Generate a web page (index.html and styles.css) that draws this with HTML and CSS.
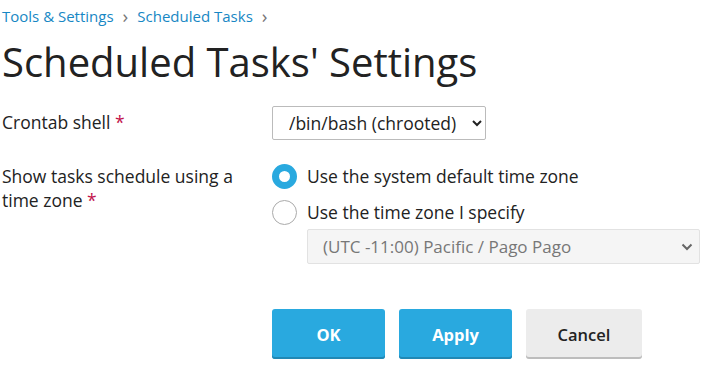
FILE: index.html
```html
<!DOCTYPE html>
<html lang="en">
<head>
    <meta charset="UTF-8">
    <title>Scheduled Tasks' Settings</title>
<link rel="stylesheet" href="styles.css">
</head>
<body>
<div class="page">
    <div class="breadcrumbs">
        <a href="#">Tools &amp; Settings</a>
        <span class="sep">&#8250;</span>
        <a href="#">Scheduled Tasks</a>
        <span class="sep">&#8250;</span>
    </div>
    <h1 class="pageTitle">Scheduled Tasks' Settings</h1>

    <form class="settingsForm">
        <div class="formRow rowShell">
            <div class="formLabel">Crontab shell <span class="req">*</span></div>
            <div class="formField">
                <select class="shellSelect" name="shell">
                    <option>/bin/bash (chrooted)</option>
                </select>
            </div>
        </div>
        <div class="formRow rowZone">
            <div class="formLabel">Show tasks schedule using a time zone <span class="req">*</span></div>
            <div class="formField">
                <label class="radioRow"><span class="radio checked"></span>Use the system default time zone</label>
                <label class="radioRow"><span class="radio"></span>Use the time zone I specify</label>
                <div class="zoneSelect">
                    <span>(UTC -11:00) Pacific / Pago Pago</span>
                    <svg width="12" height="8" viewBox="0 0 12 8"><path d="M1.5 1.5 L6 6 L10.5 1.5" fill="none" stroke="#666" stroke-width="2"/></svg>
                </div>
            </div>
        </div>
        <div class="buttons">
            <button type="button" class="btn primary">OK</button>
            <button type="button" class="btn primary">Apply</button>
            <button type="button" class="btn">Cancel</button>
        </div>
    </form>
</div>
</body>
</html>
```

FILE: styles.css
```css
body{
    margin: 0;
    background-color: white;
    font-family: 'Open Sans', 'Noto Sans', sans-serif;
    color: #222;
}
.page{
    padding: 6px 2px 0 2px;
}
.breadcrumbs{
    font-size: 15px;
    line-height: 20px;
    display: flex;
    align-items: center;
}
.breadcrumbs a{
    color: #1787c4;
    text-decoration: none;
}
.breadcrumbs .sep{
    color: #777;
    font-size: 19px;
    margin: 0 9px;
}
.pageTitle{
    font-size: 40px;
    font-weight: 400;
    line-height: 52px;
    margin: 10px 0 18px 0;
    color: #222;
}
.formRow{
    display: flex;
    font-size: 17.5px;
    line-height: 24px;
}
.formLabel{
    width: 270px;
    flex-shrink: 0;
    padding-right: 20px;
    box-sizing: border-box;
}
.req{
    color: #c2134b;
}
.rowShell .formLabel{
    padding-top: 4px;
}
.shellSelect{
    font-family: inherit;
    font-size: 17.5px;
    color: #222;
    width: 214px;
    height: 34px;
    padding: 0 6px 0 12px;
    border: 1px solid #bbb;
    border-radius: 2px;
    background-color: white;
}
.rowZone{
    margin-top: 24px;
}
.radioRow{
    display: flex;
    align-items: center;
    height: 24px;
    margin-bottom: 12px;
}
.radioRow + .radioRow{
    margin-bottom: 5px;
}
.radio{
    width: 25px;
    height: 25px;
    box-sizing: border-box;
    border: 1px solid #aaa;
    border-radius: 50%;
    margin-right: 10px;
    background-color: white;
}
.radio.checked{
    border: 7px solid #29a9df;
}
.zoneSelect{
    margin-left: 35px;
    width: 393px;
    height: 35px;
    box-sizing: border-box;
    border: 1px solid #e2e2e2;
    border-radius: 2px;
    background-color: #f5f5f5;
    color: #777;
    font-size: 17px;
    display: flex;
    align-items: center;
    justify-content: space-between;
    padding: 0 6px 0 15px;
}
.buttons{
    display: flex;
    gap: 14px;
    padding-left: 270px;
    margin-top: 45px;
}
.btn{
    width: 113px;
    height: 50px;
    border: 0;
    border-radius: 3px;
    font-family: inherit;
    font-size: 16.5px;
    font-weight: 700;
    color: #222;
    background-color: #ececec;
    box-shadow: inset 0 -2px 0 #bdbdbd;
    cursor: pointer;
}
.btn:last-child{
    width: 116px;
    font-weight: 600;
}
.btn.primary{
    color: white;
    background-color: #29a9df;
    box-shadow: inset 0 -2px 0 #2188b4;
}
```
